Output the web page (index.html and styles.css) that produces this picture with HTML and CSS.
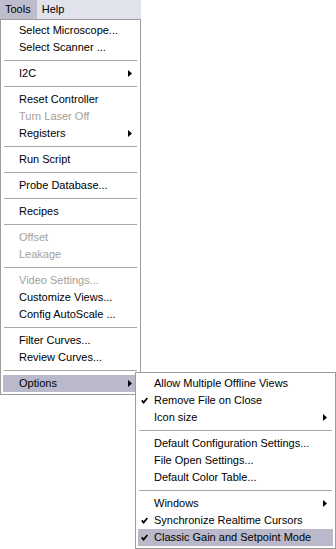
FILE: index.html
```html
<!DOCTYPE html>
<html lang="en">
<head>
    <meta charset="UTF-8">
    <title>Tools menu</title>
    <link rel="stylesheet" href="styles.css">
</head>
<body>
    <div class="menubar">
        <div class="menubar-item active">Tools</div>
        <div class="menubar-item">Help</div>
    </div>

    <div class="menu main-menu">
        <div class="item">Select Microscope...</div>
        <div class="item">Select Scanner ...</div>
        <div class="sep"></div>
        <div class="item sub">I2C<svg class="arrow" viewBox="0 0 4 7"><polygon points="0,0 4,3.5 0,7"/></svg></div>
        <div class="sep"></div>
        <div class="item">Reset Controller</div>
        <div class="item disabled">Turn Laser Off</div>
        <div class="item sub">Registers<svg class="arrow" viewBox="0 0 4 7"><polygon points="0,0 4,3.5 0,7"/></svg></div>
        <div class="sep"></div>
        <div class="item">Run Script</div>
        <div class="sep"></div>
        <div class="item">Probe Database...</div>
        <div class="sep"></div>
        <div class="item">Recipes</div>
        <div class="sep"></div>
        <div class="item disabled">Offset</div>
        <div class="item disabled">Leakage</div>
        <div class="sep"></div>
        <div class="item disabled">Video Settings...</div>
        <div class="item">Customize Views...</div>
        <div class="item">Config AutoScale ...</div>
        <div class="sep"></div>
        <div class="item">Filter Curves...</div>
        <div class="item">Review Curves...</div>
        <div class="sep"></div>
        <div class="item sub selected">Options<svg class="arrow" viewBox="0 0 4 7"><polygon points="0,0 4,3.5 0,7"/></svg></div>
    </div>

    <div class="menu sub-menu">
        <div class="item">Allow Multiple Offline Views</div>
        <div class="item"><svg class="check" viewBox="0 0 7 7"><polyline points="0.8,3.4 2.6,5.6 6.4,1"/></svg>Remove File on Close</div>
        <div class="item sub">Icon size<svg class="arrow" viewBox="0 0 4 7"><polygon points="0,0 4,3.5 0,7"/></svg></div>
        <div class="sep"></div>
        <div class="item">Default Configuration Settings...</div>
        <div class="item">File Open Settings...</div>
        <div class="item">Default Color Table...</div>
        <div class="sep"></div>
        <div class="item sub">Windows<svg class="arrow" viewBox="0 0 4 7"><polygon points="0,0 4,3.5 0,7"/></svg></div>
        <div class="item"><svg class="check" viewBox="0 0 7 7"><polyline points="0.8,3.4 2.6,5.6 6.4,1"/></svg>Synchronize Realtime Cursors</div>
        <div class="item selected"><svg class="check" viewBox="0 0 7 7"><polyline points="0.8,3.4 2.6,5.6 6.4,1"/></svg>Classic Gain and Setpoint Mode</div>
    </div>
</body>
</html>
```

FILE: styles.css
```css
body {
    margin: 0;
    background-color: #fff;
    font-family: "Liberation Sans", Arial, sans-serif;
    font-size: 11px;
    color: #000;
}

.menubar {
    display: flex;
    width: 141px;
    height: 19px;
    background-color: #e1e3ec;
}

.menubar-item {
    padding: 0 6px 0 5px;
    line-height: 18px;
}

.menubar-item.active {
    background-color: #bdbdcd;
}

.menu {
    box-sizing: border-box;
    background-color: #fff;
    border: 1px solid #9c9c9c;
    padding: 2px 0;
}

.main-menu {
    width: 141px;
}

.sub-menu {
    position: absolute;
    left: 135px;
    top: 372px;
    width: 201px;
}

.item {
    position: relative;
    height: 17px;
    line-height: 17px;
    padding-left: 16px;
    margin: 0 2px;
    white-space: nowrap;
}

.item.disabled {
    color: #a4a09a;
}

.item.selected {
    background-color: #b9b9cb;
}

.sep {
    height: 1px;
    margin: 4px 3px 4px 3px;
    background-color: #a6a6a6;
}

.arrow {
    position: absolute;
    right: 6px;
    top: 5px;
    width: 4px;
    height: 7px;
    fill: #000;
}

.check {
    position: absolute;
    left: 3px;
    top: 5px;
    width: 7px;
    height: 7px;
    fill: none;
    stroke: #000;
    stroke-width: 1.7;
}
```
